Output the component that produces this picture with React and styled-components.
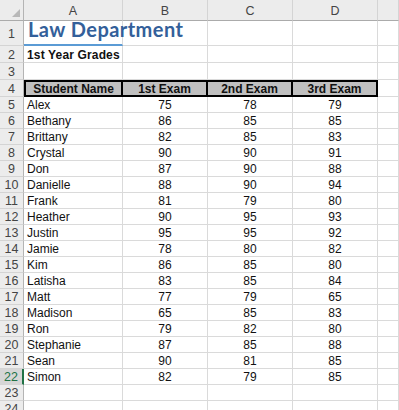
import React from "react";
import styled, { createGlobalStyle, css } from "styled-components";

const Global = createGlobalStyle`
  html, body { margin: 0; padding: 0; background: #ffffff; overflow: hidden; }
  body { font-family: "Liberation Sans", Arial, sans-serif; }
`;

const Sheet = styled.div`
  display: grid;
  grid-template-columns: 24px 99px 85px 85px 85px 1fr;
  grid-template-rows: 21px 25px 17px 17px 17px repeat(20, 16px);
  width: 399px;
  height: 410px;
  overflow: hidden;
  font-size: 12px;
  color: #000;
`;

const Corner = styled.div`
  position: relative;
  background: #ececec;
  border-right: 1px solid #b4b4b4;
  border-bottom: 1px solid #ababab;
  box-sizing: border-box;
`;

const CornerTri = styled.svg`
  position: absolute;
  right: 3px;
  bottom: 3px;
`;

const ColHeader = styled.div`
  background: #ececec;
  border-right: 1px solid #d4d4d4;
  border-bottom: 1px solid #ababab;
  box-sizing: border-box;
  display: flex;
  align-items: center;
  justify-content: center;
  padding-top: 2px;
  color: #444;
  font-size: 12.5px;
`;

const RowHeader = styled.div`
  background: ${(p) => (p.$active ? "#d6d6d6" : "#ececec")};
  border-right: ${(p) => (p.$active ? "2px solid #217346" : "1px solid #b4b4b4")};
  border-bottom: 1px solid #d4d4d4;
  box-sizing: border-box;
  display: flex;
  align-items: center;
  justify-content: center;
  color: ${(p) => (p.$active ? "#217346" : "#444")};
  font-size: 12.5px;
  padding-top: 1px;
`;

const Cell = styled.div`
  border-right: 1px solid #dadada;
  border-bottom: 1px solid #dadada;
  box-sizing: border-box;
  display: flex;
  align-items: center;
  justify-content: ${(p) => (p.$center ? "center" : "flex-start")};
  padding: 1px 0 0 ${(p) => (p.$center ? "0" : "3px")};
  white-space: nowrap;
  overflow: visible;
  font-weight: ${(p) => (p.$bold ? 700 : 400)};
  font-size: 12px;
  letter-spacing: ${(p) => (p.$bold ? "0.15px" : "0")};
  color: #111;
  ${(p) =>
    p.$spill &&
    css`
      border-right-color: transparent;
    `}
`;

const TitleCell = styled.div`
  border-right: 1px solid #dadada;
  border-bottom: 2px solid #5b9bd5;
  box-sizing: border-box;
  display: flex;
  align-items: flex-end;
  padding: 0 0 3px 4px;
  white-space: nowrap;
  font-family: Lato, "Open Sans", sans-serif;
  font-weight: 700;
  font-size: 20px;
  letter-spacing: 0.45px;
  color: #33609a;
  position: relative;
  z-index: 1;
`;

const HeadCell = styled.div`
  background: #c0c0c0;
  border-top: 2px solid #000;
  border-bottom: 2px solid #000;
  border-right: 2px solid #000;
  border-left: ${(p) => (p.$first ? "2px solid #000" : "0")};
  box-sizing: border-box;
  display: flex;
  align-items: center;
  justify-content: center;
  font-weight: 700;
  font-size: 12px;
  color: #111;
  padding-top: 1px;
`;

const students = [
  ["Alex", 75, 78, 79],
  ["Bethany", 86, 85, 85],
  ["Brittany", 82, 85, 83],
  ["Crystal", 90, 90, 91],
  ["Don", 87, 90, 88],
  ["Danielle", 88, 90, 94],
  ["Frank", 81, 79, 80],
  ["Heather", 90, 95, 93],
  ["Justin", 95, 95, 92],
  ["Jamie", 78, 80, 82],
  ["Kim", 86, 85, 80],
  ["Latisha", 83, 85, 84],
  ["Matt", 77, 79, 65],
  ["Madison", 65, 85, 83],
  ["Ron", 79, 82, 80],
  ["Stephanie", 87, 85, 88],
  ["Sean", 90, 81, 85],
  ["Simon", 82, 79, 85],
];

const cols = ["A", "B", "C", "D", ""];

export default function App() {
  const cells = [];
  cells.push(
    <Corner key="corner">
      <CornerTri width="8" height="8" viewBox="0 0 8 8">
        <polygon points="8,0 8,8 0,8" fill="#b8b8b8" />
      </CornerTri>
    </Corner>
  );
  cols.forEach((c, i) => cells.push(<ColHeader key={"ch" + i}>{c}</ColHeader>));

  cells.push(<RowHeader key="r1">1</RowHeader>);
  cells.push(<TitleCell key="t">Law Department</TitleCell>);
  for (let i = 0; i < 4; i++) cells.push(<Cell key={"r1c" + i} />);

  cells.push(<RowHeader key="r2">2</RowHeader>);
  cells.push(
    <Cell key="sub" $bold>
      1st Year Grades
    </Cell>
  );
  for (let i = 0; i < 4; i++) cells.push(<Cell key={"r2c" + i} />);

  cells.push(<RowHeader key="r3">3</RowHeader>);
  for (let i = 0; i < 5; i++) cells.push(<Cell key={"r3c" + i} />);

  cells.push(<RowHeader key="r4">4</RowHeader>);
  ["Student Name", "1st Exam", "2nd Exam", "3rd Exam"].forEach((h, i) =>
    cells.push(
      <HeadCell key={"h" + i} $first={i === 0}>
        {h}
      </HeadCell>
    )
  );
  cells.push(<Cell key="r4e" />);

  students.forEach((s, r) => {
    const rowNum = r + 5;
    cells.push(
      <RowHeader key={"rh" + rowNum} $active={rowNum === 22}>
        {rowNum}
      </RowHeader>
    );
    cells.push(<Cell key={"n" + rowNum}>{s[0]}</Cell>);
    for (let i = 1; i < 4; i++)
      cells.push(
        <Cell key={"v" + rowNum + i} $center>
          {s[i]}
        </Cell>
      );
    cells.push(<Cell key={"e" + rowNum} />);
  });

  [23, 24].forEach((n) => {
    cells.push(<RowHeader key={"rh" + n}>{n}</RowHeader>);
    for (let i = 0; i < 5; i++) cells.push(<Cell key={"x" + n + i} />);
  });

  return (
    <>
      <Global />
      <Sheet>{cells}</Sheet>
    </>
  );
}
